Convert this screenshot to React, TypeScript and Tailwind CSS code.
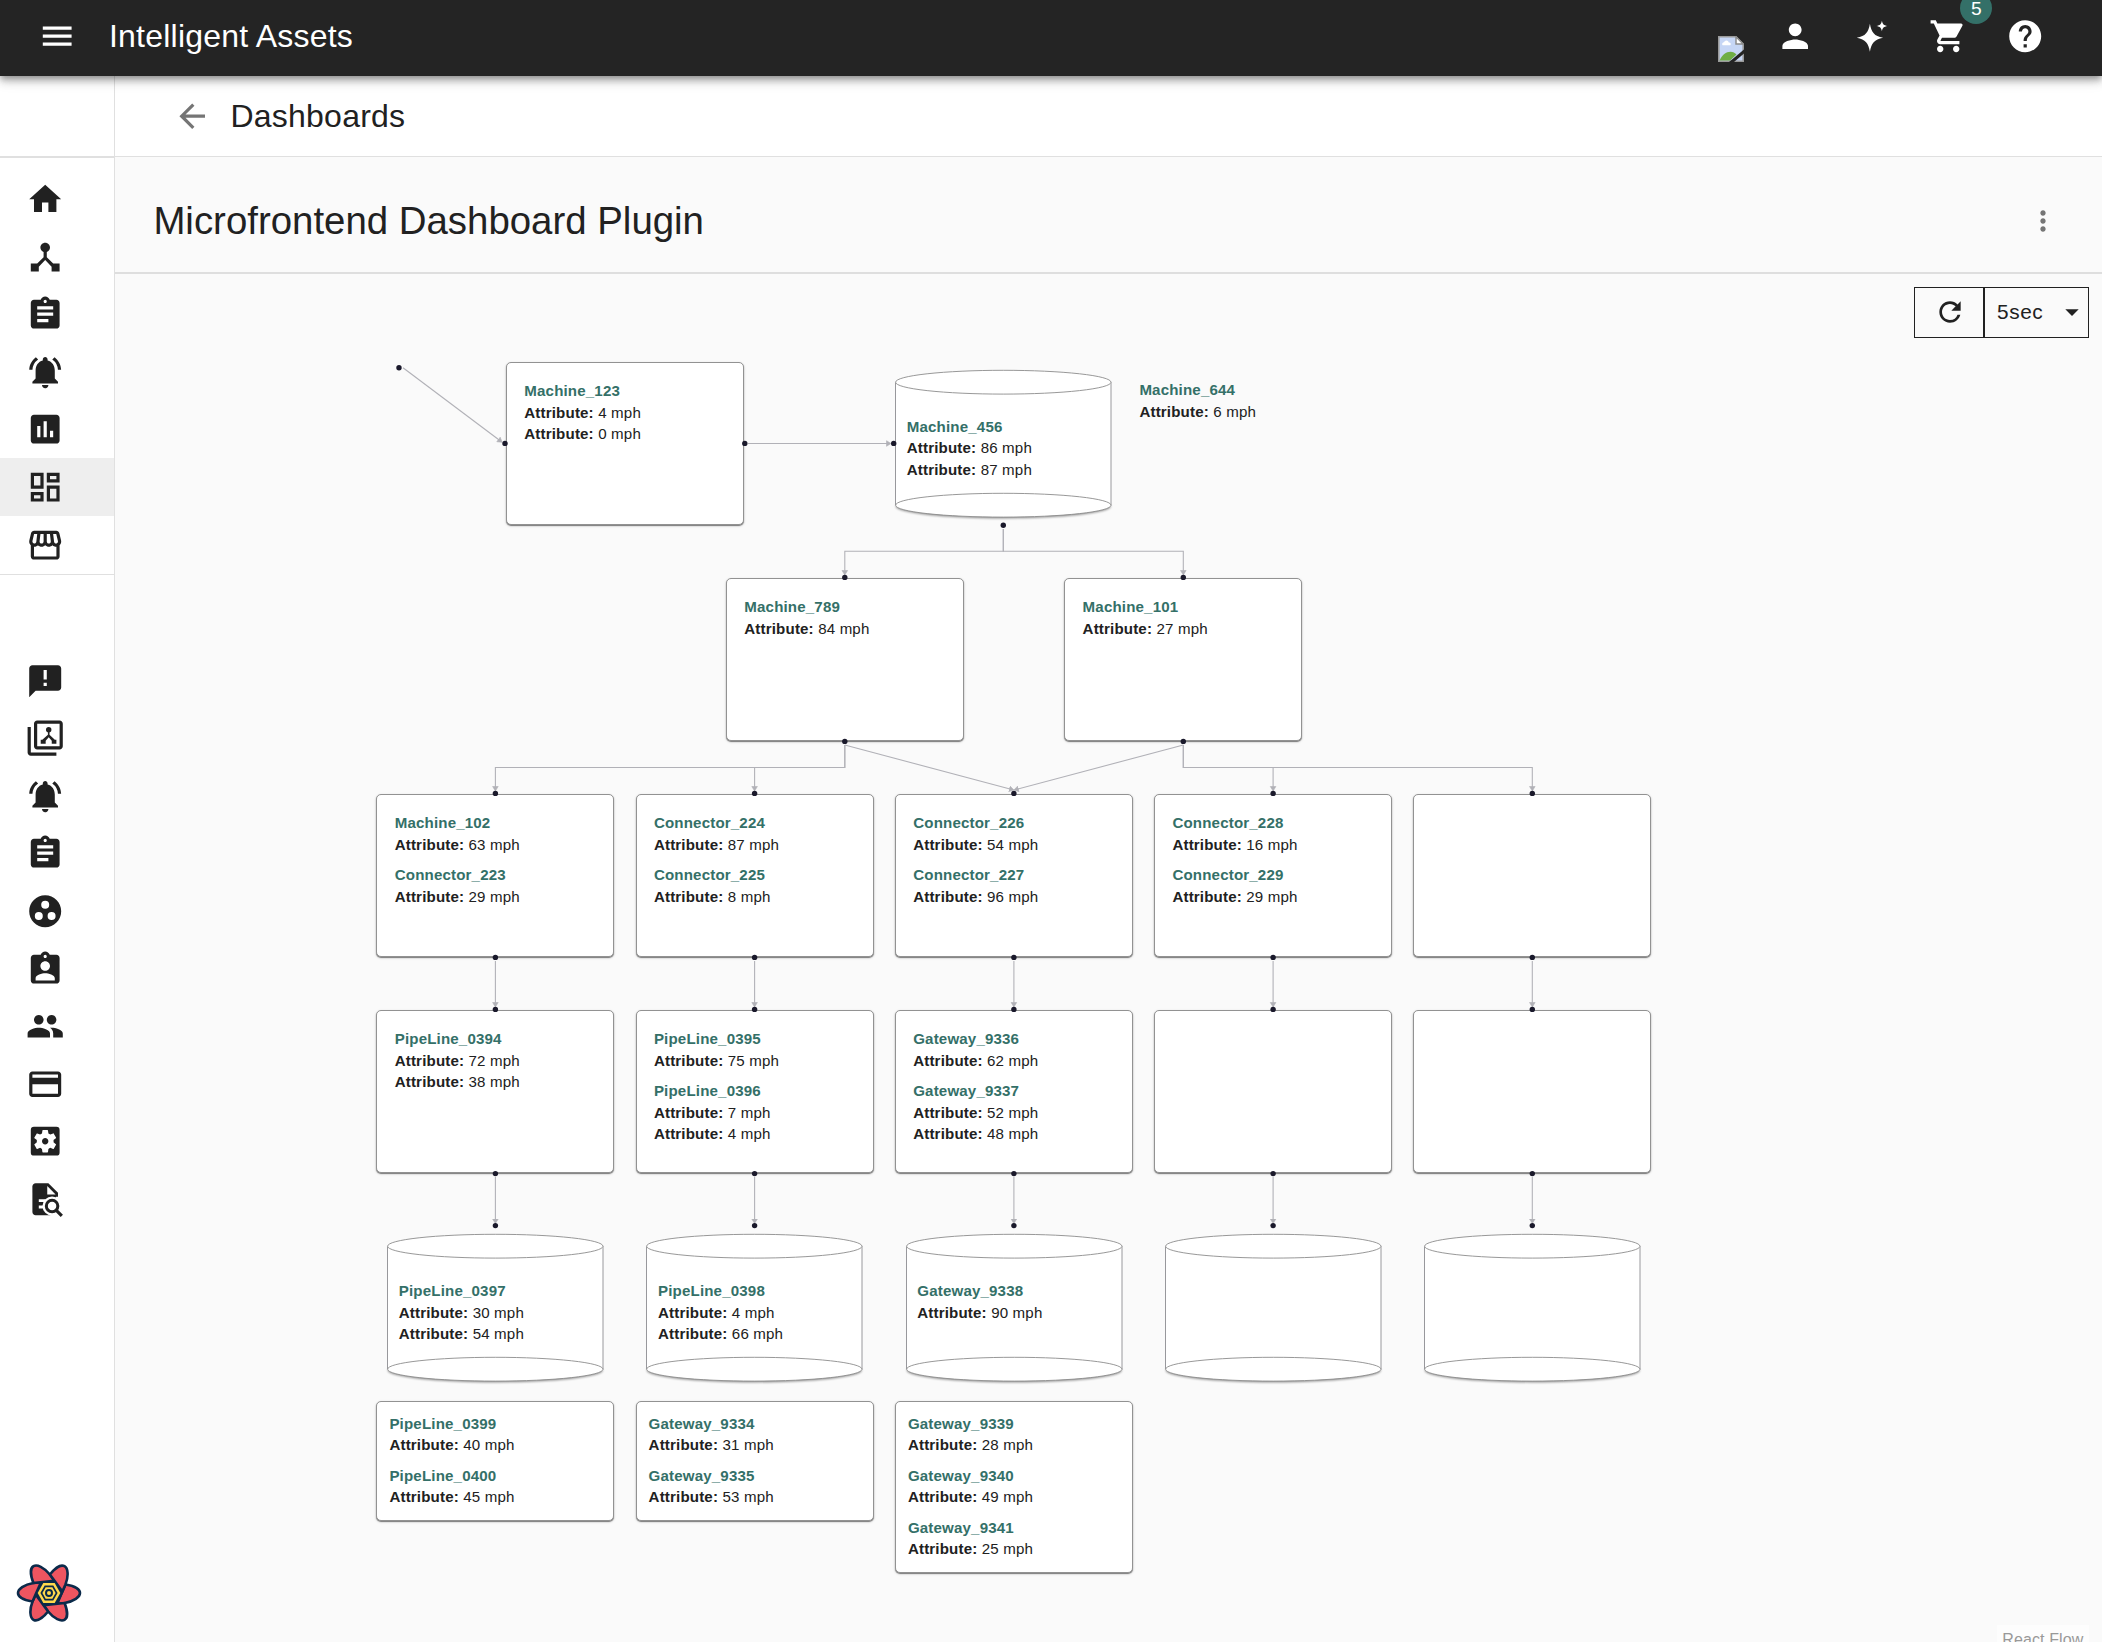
import React from "react";
import {
  MdMenu, MdPerson, MdHelp, MdArrowBack, MdMoreVert, MdRefresh, MdArrowDropDown,
  MdHome, MdDeviceHub, MdAssignment, MdNotificationsActive, MdAssessment, MdOutlineDashboard, MdOutlineStorefront,
  MdAnnouncement, MdGroupWork, MdAssignmentInd, MdPeople, MdPayment, MdSettingsApplications, MdShoppingCart,
} from "react-icons/md";

const ICON = 38.4;

function Sparkles() {
  return (
    <svg width={ICON} height={ICON} viewBox="0 0 24 24" fill="currentColor">
      <path d="M11.2 4.2C12.1 9.6 13.9 11.9 19.4 13C13.9 14.1 12.1 16.4 11.2 21.8C10.3 16.4 8.5 14.1 3 13C8.5 11.9 10.3 9.6 11.2 4.2Z" />
      <path d="M18.7 2.3C19.2 4.5 19.8 5.1 22.1 5.6C19.8 6.1 19.2 6.7 18.7 8.9C18.2 6.7 17.6 6.1 15.3 5.6C17.6 5.1 18.2 4.5 18.7 2.3Z" />
    </svg>
  );
}

function BrokenImage() {
  return (
    <svg width="26" height="26" viewBox="0 0 26 26">
      <path d="M.8 .8H18L25.2 8V25.2H.8Z" fill="#c6d6f5" stroke="#9a9a9a" strokeWidth="1.6" />
      <path d="M4.5 9.2a1.9 1.9 0 0 1 1.500-3a2.500 2.500 0 0 1 4.800 .3a1.600 1.600 0 0 1 1.500 2.700z" fill="#fff" />
      <path d="M1.6 24.4C4 19 8 15.8 12.5 15.8C15 15.8 17 17 18.5 18.5L12 24.4Z" fill="#6fae45" />
      <path d="M26 13.5V17.5L16 26H11Z" fill="#242424" />
      <path d="M18 .8V8H25.2Z" fill="#fff" stroke="#8c8c8c" strokeWidth="1.5" />
    </svg>
  );
}

function DeviceLibrary() {
  return (
    <svg width={ICON} height={ICON} viewBox="0 0 24 24" fill="currentColor">
      <path d="M3 5H1v16c0 1.100.9 2 2 2h16v-2H3V5zm18-4H7c-1.100 0-2 .9-2 2v14c0 1.100.9 2 2 2h14c1.100 0 2-.9 2-2V3c0-1.100-.9-2-2-2zm0 16H7V3h14v14z" />
      <circle cx="14.2" cy="6.7" r="1.7" />
      <path d="M13.7 7h1v2.800l3.300 3.200h1v2.500h-2.900v-1.900l-1.900-2.200-1.900 2.200v1.900H9.200V13h1l3.500-3.200z" />
    </svg>
  );
}

function FileSearch() {
  return (
    <svg width={ICON} height={ICON} viewBox="0 0 24 24">
      <path fill="currentColor" d="M6 2h8l6 6v12c0 1.100-.9 2-2 2H6c-1.100 0-2-.9-2-2V4c0-1.100.9-2 2-2z" />
      <path fill="#fff" d="M13.3 3.8V9h5.200z" />
      <path fill="#fff" d="M8 12h4v1.800H8zM8 16h3v1.800H8zM18.8 10.5H21V23H14l3-2z" />
      <circle cx="16.3" cy="16.3" r="6" fill="#fff" />
      <circle cx="16.3" cy="16.3" r="3.6" fill="#fff" stroke="currentColor" strokeWidth="1.9" />
      <path d="M18.8 18.8L22.4 22.4" stroke="currentColor" strokeWidth="2" />
    </svg>
  );
}

function FlowerLogo() {
  const angles = [0, 60, 120, 180, 240, 300];
  return (
    <svg width="66" height="62" viewBox="-33 -31 66 62">
      {angles.map((a) => (
        <path
          key={a}
          transform={`rotate(${a})`}
          d="M16.5 -8.5C26 -7 31 -3.5 31 0C31 4 25 8.5 15.6 10L-3 12L8.9 8.6Z"
          fill="#ee5560"
          stroke="#0b2a4a"
          strokeWidth="2.6"
          strokeLinejoin="round"
        />
      ))}
      <path d="M-13 0L-6.5 -11.3H6.5L13 0L6.5 11.3H-6.5Z" fill="#0b2a4a" />
      <path d="M-11.3 0L-5.7 -10H5.7L11.3 0L5.7 10H-5.7Z" fill="#ffd94c" />
      <path d="M-7.6 0L-3.8 -6.6H3.8L7.6 0L3.8 6.6H-3.8Z" fill="#ffd94c" stroke="#0b2a4a" strokeWidth="1.7" />
      <circle r="3" fill="#ffd94c" stroke="#0b2a4a" strokeWidth="2" />
    </svg>
  );
}

const primaryNav = [MdHome, MdDeviceHub, MdAssignment, MdNotificationsActive, MdAssessment, MdOutlineDashboard, MdOutlineStorefront];
const secondaryNav = [
  MdAnnouncement, DeviceLibrary, MdNotificationsActive, MdAssignment, MdGroupWork, MdAssignmentInd,
  MdPeople, MdPayment, MdSettingsApplications, FileSearch,
];

type Item = [string, ...string[]];
type FlowNode = { kind: "card" | "small" | "cylinder" | "plain"; x: number; y: number; h?: number; items: Item[] };

const col = [376.4, 635.6, 894.9, 1154.1, 1413.3];
const mid = col.map((x) => x + 119);

const nodes: FlowNode[] = [
  { kind: "card", x: 506, y: 362, items: [["Machine_123", "4", "0"]] },
  { kind: "cylinder", x: 895.2, y: 369.5, items: [["Machine_456", "86", "87"]] },
  { kind: "plain", x: 1139.4, y: 379, items: [["Machine_644", "6"]] },
  { kind: "card", x: 726, y: 578, items: [["Machine_789", "84"]] },
  { kind: "card", x: 1064.3, y: 578, items: [["Machine_101", "27"]] },
  { kind: "card", x: col[0], y: 794, items: [["Machine_102", "63"], ["Connector_223", "29"]] },
  { kind: "card", x: col[1], y: 794, items: [["Connector_224", "87"], ["Connector_225", "8"]] },
  { kind: "card", x: col[2], y: 794, items: [["Connector_226", "54"], ["Connector_227", "96"]] },
  { kind: "card", x: col[3], y: 794, items: [["Connector_228", "16"], ["Connector_229", "29"]] },
  { kind: "card", x: col[4], y: 794, items: [] },
  { kind: "card", x: col[0], y: 1010, items: [["PipeLine_0394", "72", "38"]] },
  { kind: "card", x: col[1], y: 1010, items: [["PipeLine_0395", "75"], ["PipeLine_0396", "7", "4"]] },
  { kind: "card", x: col[2], y: 1010, items: [["Gateway_9336", "62"], ["Gateway_9337", "52", "48"]] },
  { kind: "card", x: col[3], y: 1010, items: [] },
  { kind: "card", x: col[4], y: 1010, items: [] },
  { kind: "cylinder", x: col[0] + 10.8, y: 1234, items: [["PipeLine_0397", "30", "54"]] },
  { kind: "cylinder", x: col[1] + 10.8, y: 1234, items: [["PipeLine_0398", "4", "66"]] },
  { kind: "cylinder", x: col[2] + 10.8, y: 1234, items: [["Gateway_9338", "90"]] },
  { kind: "cylinder", x: col[3] + 10.8, y: 1234, items: [] },
  { kind: "cylinder", x: col[4] + 10.8, y: 1234, items: [] },
  { kind: "small", x: col[0], y: 1401, h: 120, items: [["PipeLine_0399", "40"], ["PipeLine_0400", "45"]] },
  { kind: "small", x: col[1], y: 1401, h: 120, items: [["Gateway_9334", "31"], ["Gateway_9335", "53"]] },
  { kind: "small", x: col[2], y: 1401, h: 172, items: [["Gateway_9339", "28"], ["Gateway_9340", "49"], ["Gateway_9341", "25"]] },
];

const A = 844.8;
const B = 1183.3;
const edges: string[] = [
  "M403 367.7L500.5 441",
  "M748 443.5H889",
  `M1003.3 529V551.3H${A}V573`,
  `M1003.3 529V551.3H${B}V573`,
  `M${A} 745V767.5H${mid[0]}V789`,
  `M${A} 745V767.5H${mid[1]}V789`,
  `M${A} 745L${mid[2] - 2} 789.5`,
  `M${B} 745L${mid[2] + 2} 789.5`,
  `M${B} 745V767.5H${mid[3]}V789`,
  `M${B} 745V767.5H${mid[4]}V789`,
  ...mid.map((x) => `M${x} 961V1005`),
  ...mid.map((x) => `M${x} 1177V1221.5`),
];

const handles: [number, number][] = [
  [399, 367.7], [505, 443.4], [744.8, 443.4], [893.7, 443.4], [1003.3, 525.3],
  [A, 577.4], [B, 577.4], [A, 741.4], [B, 741.4],
  ...mid.flatMap((x): [number, number][] => [[x, 793.4], [x, 957.4], [x, 1009.4], [x, 1173.6], [x, 1225.6]]),
];

function Readings({ items }: { items: Item[] }) {
  return (
    <div className="flex flex-col gap-[9px] text-[15.1px] leading-[21.5px] tracking-[0.16px] text-[#212121]">
      {items.map(([name, ...values]) => (
        <div key={name}>
          <div className="font-bold text-[#347068]">{name}</div>
          {values.map((v, i) => (
            <div key={i}>
              <b>Attribute:</b> {v} mph
            </div>
          ))}
        </div>
      ))}
    </div>
  );
}

function NodeView({ node }: { node: FlowNode }) {
  const place = { left: node.x - 115, top: node.y - 274 };
  if (node.kind === "plain") {
    return (
      <div className="absolute" style={place}>
        <Readings items={node.items} />
      </div>
    );
  }
  if (node.kind === "cylinder") {
    return (
      <div className="absolute h-[150px] w-[217px]" style={place}>
        <svg className="absolute inset-0 overflow-visible" width="217" height="150">
          <ellipse cx="108.3" cy="136.4" rx="107.5" ry="12" fill="#00000066" className="blur-[1px]" />
          <path d="M.5 12.5V135H216V12.5Z" fill="#fff" />
          <path d="M.5 12V135.5M216 12V135.5" stroke="#98989c" fill="none" />
          <ellipse cx="108.3" cy="12.200" rx="107.7" ry="11.900" fill="#fff" stroke="#8c8c8c" strokeWidth=".9" />
          <ellipse cx="108.3" cy="135.200" rx="107.7" ry="11.900" fill="#fff" stroke="#8c8c8c" strokeWidth=".9" />
        </svg>
        <div className="relative pt-[46px] pl-[11.6px]">
          <Readings items={node.items} />
        </div>
      </div>
    );
  }
  return (
    <div
      className={`absolute w-[238px] rounded-[5px] border border-[#929292] bg-white shadow-[0_1px_1px_rgba(0,0,0,0.45),0_1px_3px_rgba(0,0,0,0.15)] ${
        node.kind === "small" ? "pt-[10.5px] pl-[12px]" : "pt-[17px] pl-[17.3px]"
      }`}
      style={{ ...place, height: node.h ?? 162.5 }}
    >
      <Readings items={node.items} />
    </div>
  );
}

export default function App() {
  return (
    <div className="flex h-[1642px] w-[2102px] flex-col overflow-hidden bg-white font-['Liberation_Sans',Arial,sans-serif] text-[#212121]">
      <header className="relative z-10 flex h-[76px] shrink-0 items-center bg-[#242424] pr-[57.6px] pb-1 pl-[37.6px] text-white shadow-[0_3px_6px_-1px_rgba(0,0,0,0.3),0_6px_8px_rgba(0,0,0,0.16),0_2px_16px_rgba(0,0,0,0.12)]">
        <MdMenu size={ICON} />
        <h1 className="ml-[33px] text-[32px] tracking-[0.22px]">Intelligent Assets</h1>
        <div className="ml-auto flex items-center gap-[38.4px]">
          <div className="-mr-[7px] pt-[26px]">
            <BrokenImage />
          </div>
          <MdPerson size={ICON} />
          <Sparkles />
          <div className="relative">
            <MdShoppingCart size={ICON} />
            <span className="absolute -top-[25px] left-[31px] flex size-8 items-center justify-center rounded-full bg-[#347068] pt-[2px] text-[19.2px] leading-none">
              5
            </span>
          </div>
          <MdHelp size={ICON} />
        </div>
      </header>

      <div className="flex min-h-0 flex-1">
        <aside className="flex w-[115px] shrink-0 flex-col border-r border-[#e0e0e0] bg-white">
          <div className="h-[82px] shrink-0 border-b-2 border-[#e0e0e0]" />
          <nav className="border-b border-[#e0e0e0] pt-[12.4px]">
            {primaryNav.map((Icon, i) => (
              <div key={i} className={`flex h-[57.6px] items-center pl-[25.6px] ${i === 5 ? "bg-[#eeeeee]" : ""}`}>
                <Icon size={ICON} />
              </div>
            ))}
          </nav>
          <nav className="pt-[77.4px]">
            {secondaryNav.map((Icon, i) => (
              <div key={i} className="flex h-[57.6px] items-center pl-[25.6px]">
                <Icon size={ICON} />
              </div>
            ))}
          </nav>
          <div className="mt-auto mb-[18px] pl-4">
            <FlowerLogo />
          </div>
        </aside>

        <main className="flex min-w-0 flex-1 flex-col bg-[#fafafa]">
          <div className="flex h-[81px] shrink-0 items-center border-b border-[#e0e0e0] bg-white pl-[58px]">
            <MdArrowBack size={ICON} color="#757575" />
            <h2 className="ml-[19px] text-[32px] tracking-[0.24px]">Dashboards</h2>
          </div>
          <div className="flex h-[117px] shrink-0 items-center justify-between border-b-2 border-[#dedede] pt-[12px] pr-[43px] pl-[38.4px]">
            <h3 className="text-[38.4px]">Microfrontend Dashboard Plugin</h3>
            <MdMoreVert size={32} color="#757575" />
          </div>

          <section className="relative min-h-0 flex-1 overflow-hidden">
            <svg className="absolute inset-0" width="1987" height="1368" viewBox="115 274 1987 1368">
              <defs>
                <marker id="tip" markerUnits="userSpaceOnUse" markerWidth="8" markerHeight="8" refX="3" refY="4" orient="auto">
                  <path d="M.5 1.2L5 4L.5 6.8Z" fill="#b1b1b7" stroke="#b1b1b7" strokeWidth=".6" />
                </marker>
              </defs>
              {edges.map((d, i) => (
                <path key={i} d={d} fill="none" stroke="#b1b1b7" strokeWidth="1.08" markerEnd="url(#tip)" />
              ))}
            </svg>
            {nodes.map((n, i) => (
              <NodeView key={i} node={n} />
            ))}
            <svg className="absolute inset-0" width="1987" height="1368" viewBox="115 274 1987 1368">
              {handles.map(([x, y], i) => (
                <circle key={i} cx={x} cy={y} r="2.7" fill="#1a192b" />
              ))}
            </svg>

            <div className="absolute top-[13px] right-[13px] flex h-[51px] w-[175px] items-stretch border border-[#212121]">
              <div className="flex w-[70px] items-center justify-center border-r-2 border-[#212121] pb-px pl-[2px]">
                <MdRefresh size={32} />
              </div>
              <div className="flex flex-1 items-center justify-between pb-px pl-[12px]">
                <span className="text-[20.8px] tracking-[0.6px]">5sec</span>
                <MdArrowDropDown size={32} />
              </div>
            </div>

            <div className="absolute right-[13px] bottom-[-8px] h-[25px] bg-white/50 px-[5.5px] pt-[5px] text-[16px] leading-[20px] tracking-[0.12px] text-[#999]">
              React Flow
            </div>
          </section>
        </main>
      </div>
    </div>
  );
}
